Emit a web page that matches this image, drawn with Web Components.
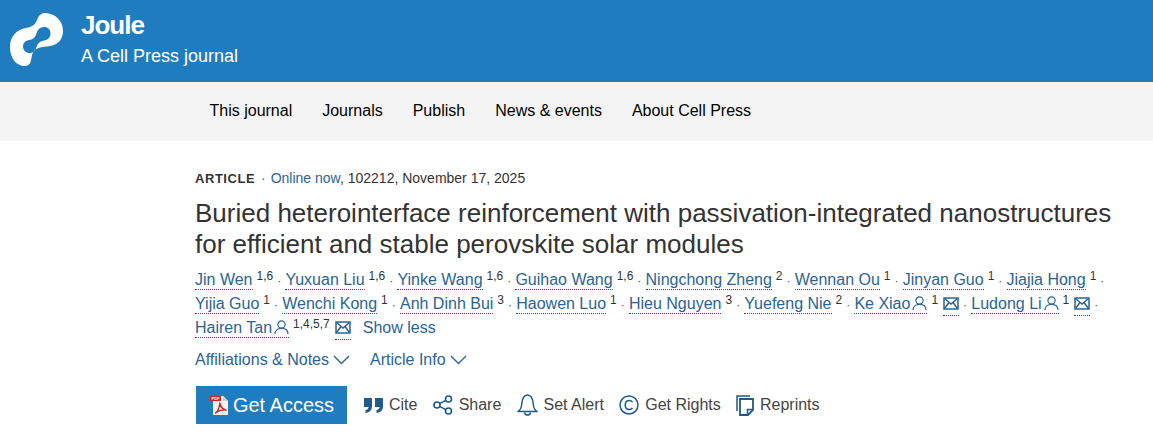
<!DOCTYPE html>
<html>
<head>
<meta charset="utf-8">
<title>Joule article</title>
<style>
    html, body { margin: 0; padding: 0; background: #fff; }
    body { font-family: "Liberation Sans", Arial, sans-serif; }
</style>
</head>
<body>
<site-header></site-header>
<site-nav>
    <span>This journal</span><span>Journals</span><span>Publish</span><span>News &amp; events</span><span>About Cell Press</span>
</site-nav>
<article-head></article-head>

<script>
const ICONS = {
    person: '<svg width="15" height="15" viewBox="0 0 15 15" fill="none" stroke="#2a6496" stroke-width="1.2"><circle cx="7.5" cy="4.5" r="3.6"/><path d="M1 14c0-3.6 2.6-5.600 6.500-5.600S14 10.400 14 14" stroke-linejoin="round"/></svg>',
    mail: '<svg width="16" height="13" viewBox="0 0 16 13" fill="none" stroke="#2a6496" stroke-width="1.5"><rect x="1" y="1" width="14" height="11"/><path d="M1.500 1.500 8 7l6.500-5.500M1.500 11.500 6 5.500M14.500 11.500 10 5.500"/></svg>',
    chevron: '<svg width="17" height="10" viewBox="0 0 17 10" fill="none" stroke="#2a6496" stroke-width="1.4"><path d="M1 1l7.500 7.500L16 1"/></svg>',
    cite: '<svg width="19" height="15" viewBox="0 0 19 15" fill="#1f5a8a"><path d="M0 0h8v8.500C8 12 5.500 14.500 1.500 15v-2.800C3.500 11.800 4.500 10.500 4.600 9H0zM11 0h8v8.500c0 3.500-2.500 6-6.500 6.500v-2.800c2-.4 3-1.700 3.100-3.200H11z"/></svg>',
    share: '<svg width="20" height="20" viewBox="0 0 20 20" fill="none" stroke="#1f5a8a" stroke-width="1.6"><circle cx="4" cy="10" r="3"/><circle cx="15.500" cy="4" r="3"/><circle cx="15.500" cy="16" r="3"/><path d="M6.700 8.600 12.800 5.400M6.700 11.400l6.100 3.200"/></svg>',
    bell: '<svg width="21" height="22" viewBox="0 0 21 22" fill="none" stroke="#1f5a8a" stroke-width="1.5"><path d="M1 17.500c2.500-1.500 3.300-3.500 3.700-7C5.100 5 6.500 1 10.500 1s5.400 4 5.800 9.500c.4 3.500 1.200 5.500 3.700 7z" stroke-linejoin="round"/><path d="M7.500 18.500c.3 1.600 1.500 2.500 3 2.500s2.700-.9 3-2.500"/></svg>',
    copyright: '<svg width="20" height="20" viewBox="0 0 20 20" fill="none" stroke="#1f5a8a" stroke-width="1.5"><circle cx="10" cy="10" r="9"/><path d="M13.500 7.200C12.700 6 11.500 5.500 10.300 5.500 7.800 5.500 6.200 7.500 6.200 10s1.600 4.500 4.100 4.500c1.200 0 2.400-.5 3.200-1.700"/></svg>',
    reprints: '<svg width="18" height="21" viewBox="0 0 18 21" fill="none" stroke="#1f5a8a" stroke-width="1.500"><path d="M1 16V1h13"/><path d="M4 4h13v11l-5 5H4z" stroke-width="1.800"/><path d="M17 14.500h-5.500V20"/></svg>',
    pdf: '<svg width="21" height="20" viewBox="0 0 21 20"><path d="M4 1h10l5 5v14H4z" fill="#f6f1ea"/><path d="M14 1v5h5z" fill="#cfcfcf"/><rect x="1" y="1" width="11" height="5" fill="#c9252b"/><text x="2.500" y="5" font-size="4" font-weight="700" fill="#fff" font-family="Liberation Sans, sans-serif">PDF</text><path d="M6.500 18c2.500-2 4-5 4.300-10 .7 3.800 2.500 6.200 6.200 7-4-.4-7.500.5-10.500 3z" fill="none" stroke="#d2232a" stroke-width="1.400" stroke-linejoin="round"/></svg>'
};

class SiteHeader extends HTMLElement {
    constructor() {
        super();
        this.attachShadow({ mode: 'open' });
    }

    connectedCallback() {
        this.shadowRoot.innerHTML = `
            <style>
                :host { display: flex; height: 82px; background: #1f7dbf; color: #fff; box-sizing: border-box; padding-left: 10px; align-items: flex-start; }
                svg { margin-top: 13px; flex: none; }
                .text { margin-left: 18px; }
                .name { font-size: 26px; font-weight: 700; letter-spacing: -1px; line-height: 28px; margin-top: 11px; }
                .sub { font-size: 18px; line-height: 20px; margin-top: 7px; }
            </style>
            <svg width="53" height="53" viewBox="10 13 53 53">
                <path fill="#fff" fill-rule="evenodd" d="M46 13C56 14 63 21 63 31C63 41 56 46 47 46.500C39 47 33.500 49 32 55C31 60 31 66 25 66C16 66 10 58 10 47C10 36 17 29.500 26 28C32 27 35 25 37 20C39 15 41 13 46 13ZM44 27C39.500 27 37.500 30 36.500 33.500C35.500 37 33 39.500 29.500 40C25.500 40.500 23 43 23 46.500C23 50.500 26 53 29.500 53C33.500 53 35.500 50.500 36.500 47C37.500 43.500 40 41 44 40.500C48 40 50.500 37.500 50.500 33.500C50.500 29.500 48 27 44 27Z"/>
            </svg>
            <div class="text">
                <div class="name">Joule</div>
                <div class="sub">A Cell Press journal</div>
            </div>
        `;
    }
}

class SiteNav extends HTMLElement {
    constructor() {
        super();
        this.attachShadow({ mode: 'open' });
    }

    connectedCallback() {
        this.shadowRoot.innerHTML = `
            <style>
                :host { display: flex; height: 57px; background: #f4f4f4; align-items: center; padding: 0 0 2px 209.5px; color: #000; font-size: 16px; }
                ::slotted(span) { margin-right: 30px; }
            </style>
            <slot></slot>
        `;
    }
}

class AuthorName extends HTMLElement {
    constructor() {
        super();
        this.attachShadow({ mode: 'open' });
    }

    connectedCallback() {
        const sup = this.getAttribute('sup') || '';
        const contact = this.hasAttribute('contact');
        const last = this.hasAttribute('last');
        const name = `<span class="name">${this.getAttribute('name')}${contact ? `<span class="person">${ICONS.person}</span>` : ''}</span>`;
        const mail = contact ? `<span class="mail">${ICONS.mail}</span>` : '';
        this.shadowRoot.innerHTML = `<style>
                :host { display: inline; }
                .name { color: #2a6496; border-bottom: 1px dotted #1f5a8a; padding-bottom: 1px; }
                .person { display: inline-block; vertical-align: -2px; margin-left: 2px; height: 15px; }
                .mail { color: #2a6496; border-bottom: 1px dotted #1f5a8a; padding-bottom: 3px; margin-left: 5px; }
                .mail svg { vertical-align: -1px; }
                sup { font-size: 12px; color: #333; line-height: 0; vertical-align: 5px; margin-left: 4px; }
                .dot { color: #555; margin: 0 4.2px 0 4px; font-size: 12px; }
            </style>${name}<sup>${sup}</sup>${mail}${last ? '' : '<span class="dot">·</span>'}`;
    }
}

class ToolLink extends HTMLElement {
    constructor() {
        super();
        this.attachShadow({ mode: 'open' });
    }

    connectedCallback() {
        const icon = ICONS[this.getAttribute('icon')];
        this.shadowRoot.innerHTML = `
            <style>
                :host { display: inline-flex; align-items: center; gap: 6px; font-size: 16px; color: #444; }
                span { display: flex; }
            </style>
            <span>${icon}</span><slot></slot>
        `;
    }
}

class ArticleHead extends HTMLElement {
    constructor() {
        super();
        this.attachShadow({ mode: 'open' });
    }

    connectedCallback() {
        const row = (items) => items.map((a) => {
            const attrs = [`name="${a[0]}"`, `sup="${a[1]}"`];
            if (a[2]) attrs.push('contact');
            if (a[3]) attrs.push('last');
            return `<author-name ${attrs.join(' ')}></author-name>`;
        }).join('');

        this.shadowRoot.innerHTML = `
            <style>
                :host { display: block; padding: 29px 20px 0 195px; color: #333; }
                .meta { font-size: 14px; line-height: 16px; color: #333; }
                .meta b { letter-spacing: 0.55px; font-size: 13px; }
                .meta a { color: #2a6496; }
                .meta i { font-style: normal; color: #666; margin: 0 1px 0 2px; }
                h1 { margin: 11px 0 0; font-weight: 400; font-size: 26px; line-height: 31px; color: #333; width: 930px; }
                .authors { margin-top: 8px; font-size: 16px; line-height: 24px; }
                .authors div { white-space: nowrap; height: 24px; }
                .more { color: #2a6496; margin-left: 12px; }
                .toggles { display: flex; gap: 20px; margin-top: 8px; font-size: 16px; line-height: 24px; color: #2a6496; }
                .toggles span { display: flex; align-items: center; gap: 4px; }
                .actions { display: flex; align-items: center; margin-top: 14px; }
                .btn { display: flex; align-items: center; justify-content: center; width: 151px; height: 38px; margin-left: 1px; gap: 3px; background: #1f7dbf; color: #fff; font-size: 20px; }
                .btn svg { display: block; }
                .tools { display: flex; gap: 15.2px; margin-left: 17px; }
            </style>
            <div class="meta"><b>ARTICLE</b> <i>·</i> <a>Online now</a>, 102212, November 17, 2025</div>
            <h1>Buried heterointerface reinforcement with passivation-integrated nanostructures for efficient and stable perovskite solar modules</h1>
            <div class="authors">
                <div>${row([['Jin Wen','1,6'],['Yuxuan Liu','1,6'],['Yinke Wang','1,6'],['Guihao Wang','1,6'],['Ningchong Zheng','2'],['Wennan Ou','1'],['Jinyan Guo','1'],['Jiajia Hong','1']])}</div>
                <div>${row([['Yijia Guo','1'],['Wenchi Kong','1'],['Anh Dinh Bui','3'],['Haowen Luo','1'],['Hieu Nguyen','3'],['Yuefeng Nie','2'],['Ke Xiao','1',true],['Ludong Li','1',true]])}</div>
                <div>${row([['Hairen Tan','1,4,5,7',true,true]])}<span class="more">Show less</span></div>
            </div>
            <div class="toggles">
                <span>Affiliations &amp; Notes ${ICONS.chevron}</span>
                <span>Article Info ${ICONS.chevron}</span>
            </div>
            <div class="actions">
                <div class="btn">${ICONS.pdf}<span>Get Access</span></div>
                <div class="tools">
                    <tool-link icon="cite">Cite</tool-link>
                    <tool-link icon="share">Share</tool-link>
                    <tool-link icon="bell">Set Alert</tool-link>
                    <tool-link icon="copyright">Get Rights</tool-link>
                    <tool-link icon="reprints">Reprints</tool-link>
                </div>
            </div>
        `;
    }
}

customElements.define('site-header', SiteHeader);
customElements.define('site-nav', SiteNav);
customElements.define('author-name', AuthorName);
customElements.define('tool-link', ToolLink);
customElements.define('article-head', ArticleHead);
</script>
</body>
</html>
